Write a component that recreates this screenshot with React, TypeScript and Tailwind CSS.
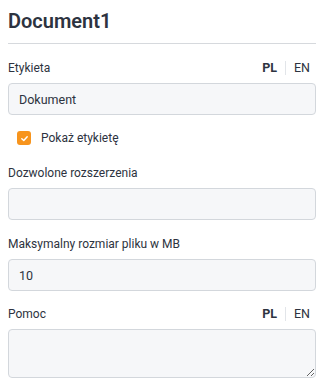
import React, { useState } from 'react';

function LangSwitch() {
  return (
    <div className="flex items-center text-[12.5px] leading-none">
      <span className="font-bold text-[#2d3340]">PL</span>
      <span className="mx-[8px] h-[14px] w-px bg-[#e2e5e9]" />
      <span className="text-[#2d3340]">EN</span>
    </div>
  );
}

function Field({ label, lang, children }: { label: string; lang?: boolean; children: React.ReactNode }) {
  return (
    <div className="flex flex-col">
      <div className="flex h-[20px] items-center justify-between pr-[6px]">
        <span className="text-[12px] leading-[20px] text-[#2d3340]">{label}</span>
        {lang && <LangSwitch />}
      </div>
      <div className="mt-[5px]">{children}</div>
    </div>
  );
}

const inputCls =
  'block w-full h-[32px] rounded-[4px] border border-[#d3d7dc] bg-[#f6f7f9] px-[10px] text-[12.5px] text-[#2d3340] outline-none';

export default function App() {
  const [label, setLabel] = useState('Dokument');
  const [show, setShow] = useState(true);
  const [ext, setExt] = useState('');
  const [size, setSize] = useState('10');
  const [help, setHelp] = useState('');

  return (
    <div className="w-[324px] bg-white px-[8px] pt-[8px] font-['Roboto',sans-serif]">
      <h1 className="pb-[8px] text-[20px] font-semibold leading-[27px] text-[#2d3340]">Document1</h1>
      <div className="h-px bg-[#d6d9dd]" />

      <div className="mt-[14px] flex flex-col">
        <Field label="Etykieta" lang>
          <input className={inputCls} value={label} onChange={(e) => setLabel(e.target.value)} />
        </Field>

        <label className="mt-[15px] flex h-[16px] cursor-pointer items-center pl-[9px]">
          <span
            onClick={() => setShow(!show)}
            className={`flex h-[14px] w-[14px] items-center justify-center rounded-[3px] ${show ? 'bg-[#f7941d]' : 'border border-[#d3d7dc] bg-white'}`}
          >
            {show && (
              <svg width="9" height="9" viewBox="0 0 10 10" fill="none">
                <path d="M2 5.2 4.2 7.3 8 3" stroke="white" strokeWidth="1.6" strokeLinecap="round" strokeLinejoin="round" />
              </svg>
            )}
          </span>
          <span className="ml-[10px] text-[12px] text-[#2d3340]">Pokaż etykietę</span>
        </label>

        <div className="mt-[17px]">
          <Field label="Dozwolone rozszerzenia">
            <input className={inputCls} value={ext} onChange={(e) => setExt(e.target.value)} />
          </Field>
        </div>

        <div className="mt-[14px]">
          <Field label="Maksymalny rozmiar pliku w MB">
            <input className={inputCls} value={size} onChange={(e) => setSize(e.target.value)} />
          </Field>
        </div>

        <div className="mt-[13px]">
          <Field label="Pomoc" lang>
            <textarea
              className="block h-[49px] w-full resize-y rounded-[4px] border border-[#d3d7dc] bg-[#f6f7f9] px-[10px] py-[6px] text-[12.5px] text-[#2d3340] outline-none"
              value={help}
              onChange={(e) => setHelp(e.target.value)}
            />
          </Field>
        </div>
      </div>
    </div>
  );
}
